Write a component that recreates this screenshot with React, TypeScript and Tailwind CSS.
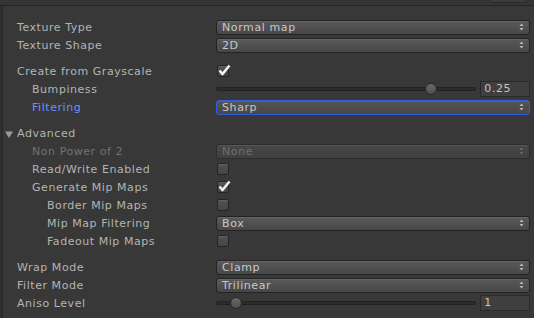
import React from "react";

const font = { fontFamily: '"DejaVu Sans", "Liberation Sans", sans-serif' };

function Arrows({ dim }: { dim?: boolean }) {
  const c = dim ? "#6a6a6a" : "#b8b8b8";
  return (
    <svg width="5" height="8" viewBox="0 0 5 8" className="shrink-0">
      <path d="M2.5 0.5 L4.5 3 L0.5 3 Z" fill={c} />
      <path d="M0.5 5 L4.5 5 L2.5 7.5 Z" fill={c} />
    </svg>
  );
}

function Popup({ value, dim, focus }: { value: string; dim?: boolean; focus?: boolean }) {
  return (
    <div
      className={`flex h-[15px] w-full items-center justify-between rounded-[3px] border pl-[5px] pr-[5px] text-[11px] leading-none ${
        focus
          ? "border-[#2f5bd8] bg-gradient-to-b from-[#555] to-[#464646] text-[#c8c8c8]"
          : dim
          ? "border-[#2c2c2c] bg-gradient-to-b from-[#474747] to-[#404040] text-[#6e6e6e]"
          : "border-[#232323] bg-gradient-to-b from-[#5a5a5a] to-[#474747] text-[#c8c8c8]"
      } shadow-[inset_0_1px_0_rgba(255,255,255,0.08)]`}
    >
      <span className="pt-px tracking-[0.6px]">{value}</span>
      <Arrows dim={dim} />
    </div>
  );
}

function Check({ on }: { on?: boolean }) {
  return (
    <div className="relative ml-px h-[12px] w-[12px] rounded-[2px] border border-[#242424] bg-gradient-to-b from-[#535353] to-[#444] shadow-[inset_0_1px_0_rgba(255,255,255,0.08)]">
      {on && (
        <svg width="13" height="12" viewBox="0 0 13 12" className="absolute left-[0px] top-[-2px]">
          <path d="M1.5 6.5 L4.5 10 L11.5 1.5" stroke="#f0f0f0" strokeWidth="2.6" fill="none" strokeLinejoin="round" />
        </svg>
      )}
    </div>
  );
}

function Slider({ pos, value }: { pos: number; value: string }) {
  return (
    <div className="flex w-full items-center">
      <div className="relative flex h-[18px] w-[262px] items-center">
        <div className="h-[4px] w-full rounded-full border border-[#222] bg-[#2c2c2c]" />
        <div
          className="absolute top-[3px] h-[12px] w-[12px] rounded-full border border-[#262626] bg-gradient-to-b from-[#6a6a6a] to-[#4e4e4e]"
          style={{ left: pos - 6 }}
        />
      </div>
      <div className="ml-[4px] flex h-[16px] w-[50px] items-center border border-[#2a2a2a] bg-[#3f3f3f] pl-[3px] pt-px text-[11px] tracking-[0.6px] text-[#c4c4c4]">
        {value}
      </div>
    </div>
  );
}

function Row({
  label,
  indent = 0,
  color = "text-[#b4b4b4]",
  children,
}: {
  label: string;
  indent?: number;
  color?: string;
  children?: React.ReactNode;
}) {
  const pad = indent === 0 ? "pl-[17px]" : indent === 1 ? "pl-[32px]" : "pl-[47px]";
  return (
    <div className="flex h-[18px] items-center">
      <div className={`w-[216px] shrink-0 pt-[2px] text-[11px] tracking-[0.55px] ${pad} ${color}`}>{label}</div>
      <div className="flex w-[314px] items-center">{children}</div>
    </div>
  );
}

export default function App() {
  return (
    <div className="h-[318px] w-[534px] overflow-hidden bg-[#383838]" style={font}>
      <div className="flex h-[6px] border-b border-[#252525] bg-[#353535] pl-[490px]">
        <div className="h-[3px] w-[37px] rounded-b-[2px] border border-t-0 border-[#2a2a2a] bg-[#3c3c3c]" />
      </div>
      <div className="flex">
        <div className="w-[2px] shrink-0 bg-[#2f2f2f]" />
        <div className="w-px shrink-0 bg-[#262626]" />
        <div className="-ml-[3px] flex flex-1 flex-col pt-[12px]">
          <Row label="Texture Type"><Popup value="Normal map" /></Row>
          <Row label="Texture Shape"><Popup value="2D" /></Row>
          <div className="h-[8px]" />
          <Row label="Create from Grayscale"><Check on /></Row>
          <Row label="Bumpiness" indent={1}><Slider pos={215} value="0.25" /></Row>
          <Row label="Filtering" indent={1} color="text-[#6a90ff]"><Popup value="Sharp" focus /></Row>
          <div className="h-[8px]" />
          <div className="flex h-[18px] items-center pl-[5px] pt-[2px] text-[11px] tracking-[0.55px] text-[#b4b4b4]">
            <svg width="8" height="7" viewBox="0 0 8 7" className="mr-[4px]">
              <path d="M0 0.5 L8 0.5 L4 7 Z" fill="#9a9a9a" />
            </svg>
            Advanced
          </div>
          <Row label="Non Power of 2" indent={1} color="text-[#737373]"><Popup value="None" dim /></Row>
          <Row label="Read/Write Enabled" indent={1}><Check /></Row>
          <Row label="Generate Mip Maps" indent={1}><Check on /></Row>
          <Row label="Border Mip Maps" indent={2}><Check /></Row>
          <Row label="Mip Map Filtering" indent={2}><Popup value="Box" /></Row>
          <Row label="Fadeout Mip Maps" indent={2}><Check /></Row>
          <div className="h-[8px]" />
          <Row label="Wrap Mode"><Popup value="Clamp" /></Row>
          <Row label="Filter Mode"><Popup value="Trilinear" /></Row>
          <Row label="Aniso Level"><Slider pos={20} value="1" /></Row>
          <div className="h-[20px]" />
        </div>
      </div>
    </div>
  );
}
